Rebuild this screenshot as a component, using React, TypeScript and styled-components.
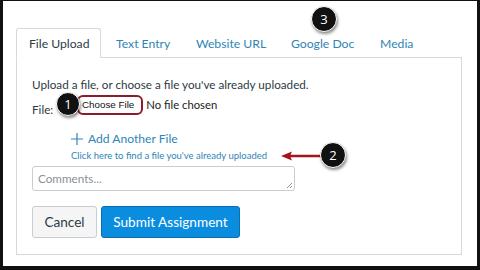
import React from "react";
import styled, { createGlobalStyle } from "styled-components";

const GlobalStyle = createGlobalStyle`
  html, body {
    margin: 0;
    padding: 0;
    background: #000;
  }
  * {
    box-sizing: border-box;
  }
`;

const link = "#2f85b5";

const Frame = styled.div`
  position: relative;
  width: 480px;
  height: 270px;
  background: #fff;
  border-style: solid;
  border-color: #111;
  border-width: 1px 3px 4px 3px;
  padding: 27px 16px 0 13px;
  font-family: Lato, "Open Sans", sans-serif;
  color: #2d3b45;
  white-space: nowrap;
`;

const Tabs = styled.div`
  display: flex;
  align-items: flex-end;
  height: 30px;
  position: relative;
  z-index: 1;
`;

const Tab = styled.div<{ $active?: boolean; $w: number }>`
  width: ${({ $w }) => $w}px;
  height: 30px;
  padding: 1px 0 0 ${({ $active }) => ($active ? "12px" : "14px")};
  display: flex;
  align-items: center;
  font-size: 12.2px;
  color: ${({ $active }) => ($active ? "#2d3b45" : link)};
  background: ${({ $active }) => ($active ? "#fff" : "transparent")};
  border: 1px solid ${({ $active }) => ($active ? "#d5d9dc" : "transparent")};
  border-bottom-color: ${({ $active }) => ($active ? "#fff" : "transparent")};
  border-radius: 3px 3px 0 0;
`;

const Panel = styled.div`
  margin-top: -1px;
  width: 446px;
  height: 198px;
  border: 1px solid #d5d9dc;
  padding: 19px 15px 0 15px;
  display: flex;
  flex-direction: column;
`;

const Intro = styled.p`
  margin: 0;
  font-size: 11.7px;
  line-height: 15px;
`;

const FileRow = styled.div`
  display: flex;
  align-items: center;
  margin-top: 2px;
  height: 21px;
`;

const Label = styled.span`
  font-size: 11.7px;
  margin-top: 9px;
  width: 45px;
`;

const ChooseButton = styled.span`
  display: inline-flex;
  align-items: center;
  height: 20px;
  padding: 0 7px 0 3px;
  font-family: "Liberation Sans", Arial, sans-serif;
  font-size: 9.8px;
  color: #111;
  border: 2px solid #8c1c2c;
  border-radius: 6px;
  background: #fff;
`;

const NoFile = styled.span`
  margin-left: 3px;
  font-size: 11.3px;
  color: #222;
`;

const AddLink = styled.div`
  display: flex;
  align-items: center;
  gap: 5px;
  margin: 16px 0 0 39px;
  font-size: 12.1px;
  color: ${link};
`;

const FindLink = styled.div`
  margin: 4px 0 0 39px;
  font-size: 9.5px;
  color: ${link};
`;

const Comments = styled.div`
  margin-top: 5px;
  width: 263px;
  height: 25px;
  border: 1px solid #c7cdd1;
  border-radius: 3px;
  padding: 4px 5px;
  font-size: 11.7px;
  color: #8a9196;
  position: relative;
`;

const Grip = styled.svg`
  position: absolute;
  right: 1px;
  bottom: 1px;
`;

const Buttons = styled.div`
  display: flex;
  gap: 4px;
  margin-top: 15px;
`;

const Button = styled.div<{ $primary?: boolean }>`
  height: 32px;
  display: flex;
  align-items: center;
  justify-content: center;
  font-size: 13.6px;
  border-radius: 3px;
  border: 1px solid ${({ $primary }) => ($primary ? "#0a6fb5" : "#c7cdd1")};
  background: ${({ $primary }) => ($primary ? "#0b8ddf" : "#f5f5f5")};
  color: ${({ $primary }) => ($primary ? "#fff" : "#2d3b45")};
  width: ${({ $primary }) => ($primary ? "139px" : "65px")};
`;

const Badge = styled.div<{ $x: number; $y: number; $r: number }>`
  position: absolute;
  left: ${({ $x, $r }) => $x - $r}px;
  top: ${({ $y, $r }) => $y - $r}px;
  width: ${({ $r }) => $r * 2}px;
  height: ${({ $r }) => $r * 2}px;
  border-radius: 50%;
  background: #111;
  border: 1.5px solid #fff;
  box-shadow: 1px 2px 3px rgba(0, 0, 0, 0.45);
  color: #fff;
  font-family: "Open Sans", sans-serif;
  font-size: 13px;
  display: flex;
  align-items: center;
  justify-content: center;
  z-index: 3;
`;

const Arrow = styled.svg`
  position: absolute;
  left: 277px;
  top: 149px;
  z-index: 2;
`;

export default function App() {
  return (
    <>
      <GlobalStyle />
      <Frame>
        <Tabs>
          <Tab $active $w={85}>File Upload</Tab>
          <Tab $w={80}>Text Entry</Tab>
          <Tab $w={95}>Website URL</Tab>
          <Tab $w={89}>Google Doc</Tab>
          <Tab $w={60}>Media</Tab>
        </Tabs>
        <Panel>
          <Intro>Upload a file, or choose a file you've already uploaded.</Intro>
          <FileRow>
            <Label>File:</Label>
            <ChooseButton>Choose File</ChooseButton>
            <NoFile>No file chosen</NoFile>
          </FileRow>
          <AddLink>
            <svg width="12" height="12" viewBox="0 0 12 12">
              <path d="M6 0v12M0 6h12" stroke={link} strokeWidth="1.2" />
            </svg>
            Add Another File
          </AddLink>
          <FindLink>Click here to find a file you've already uploaded</FindLink>
          <Comments>
            Comments...
            <Grip width="7" height="7" viewBox="0 0 7 7">
              <path d="M6 1L1 6M6 4L4 6" stroke="#777" strokeWidth="0.8" />
            </Grip>
          </Comments>
          <Buttons>
            <Button>Cancel</Button>
            <Button $primary>Submit Assignment</Button>
          </Buttons>
        </Panel>
        <Arrow width="44" height="12" viewBox="0 0 44 12">
          <path d="M10 6H44" stroke="#a3141f" strokeWidth="2.6" />
          <path d="M1 6L12 1.5L10 6L12 10.5Z" fill="#a3141f" />
        </Arrow>
        <Badge $x={65} $y={103} $r={12}>1</Badge>
        <Badge $x={330} $y={154} $r={13}>2</Badge>
        <Badge $x={321} $y={18} $r={13}>3</Badge>
      </Frame>
    </>
  );
}
